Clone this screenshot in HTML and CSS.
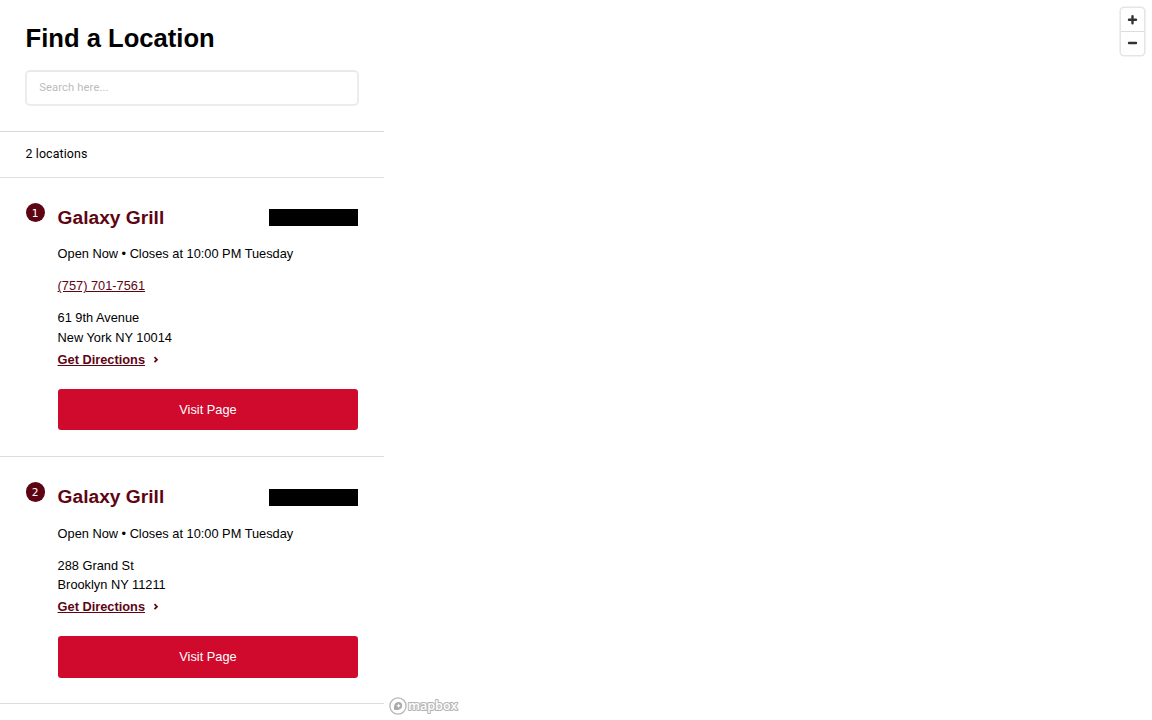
FILE: index.html
```html
<!DOCTYPE html>
<html lang="en">
<head>
<meta charset="utf-8">
<title>Find a Location</title>
<link rel="stylesheet" href="styles.css">
</head>
<body>
<div class="locator">
  <main class="sidebar">
    <header class="search">
      <h1 class="search-title">Find a Location</h1>
      <input class="search-input" type="text" placeholder="Search here..." aria-label="Search">
    </header>
    <div class="count">2 locations</div>
    <article class="card">
      <div class="pin">1</div>
      <div class="card-body">
        <div class="card-head"><h2 class="name">Galaxy Grill</h2><span class="distance"></span></div>
        <div class="row">Open Now • Closes at 10:00 PM Tuesday</div>
        <div class="row"><a class="phone">(757) 701-7561</a></div>
        <div class="row">61 9th Avenue<br>New York NY 10014</div>
        <div class="directions"><a class="directions-link">Get Directions</a><svg class="chevron" viewBox="0 0 6 7"><path d="M1.5 1.2l2.5 2.5-2.5 2.5"/></svg></div>
        <a class="button">Visit Page</a>
      </div>
    </article>
    <article class="card">
      <div class="pin">2</div>
      <div class="card-body">
        <div class="card-head"><h2 class="name">Galaxy Grill</h2><span class="distance"></span></div>
        <div class="row">Open Now • Closes at 10:00 PM Tuesday</div>
        <div class="row">288 Grand St<br>Brooklyn NY 11211</div>
        <div class="directions"><a class="directions-link">Get Directions</a><svg class="chevron" viewBox="0 0 6 7"><path d="M1.5 1.2l2.5 2.5-2.5 2.5"/></svg></div>
        <a class="button">Visit Page</a>
      </div>
    </article>
  </main>
  <section class="map">
    <div class="zoom">
      <button class="zoom-button" aria-label="Zoom in"><svg class="zoom-icon" viewBox="0 0 11 10"><path d="M5.5 1.2v7M2 4.7h7"/></svg></button>
      <button class="zoom-button" aria-label="Zoom out"><svg class="zoom-icon" viewBox="0 0 11 10"><path d="M2 5h7"/></svg></button>
    </div>
    <svg class="logo" viewBox="0 0 72 20">
      <circle cx="10" cy="10" r="8.1" fill="#fff" stroke="#b5b5b5" stroke-width="1.3"/>
      <path d="M6.2 13.8C5.6 10.4 6.4 6 10.5 6a3.7 3.7 0 0 1 3.7 3.7c0 3.8-4.6 4.7-8 4.1z" fill="#aaa"/>
      <path d="M10.6 7.5l.7 1.5 1.5.7-1.5.7-.7 1.5-.7-1.5-1.5-.7 1.5-.7z" fill="#fff"/>
      <text class="wordmark" x="20" y="13.6" textLength="49.5" lengthAdjust="spacingAndGlyphs">mapbox</text>
    </svg>
  </section>
</div>
</body>
</html>
```
FILE: styles.css
```css
* { box-sizing: border-box; }
body { margin: 0; background: #fff; color: #000; font: 12.8px/19.2px "Liberation Sans", Arial, sans-serif; }
.locator { display: flex; height: 720px; overflow: hidden; }
.sidebar { width: 384px; flex: none; }
.search { height: 132px; padding: 19.2px 25.6px 0; border-bottom: 1px solid #d9d9d9; }
.search-title { margin: 0 0 12.8px; font-size: 25.6px; line-height: 38.4px; font-weight: 700; }
.search-input { display: block; width: 333.4px; height: 35.6px; margin-left: -.2px; padding: 0 11.9px 1.6px; border: 2px solid #ececec; border-top-color: #e9e9e9; border-radius: 5px; background: #fff; font: 11.2px Roboto, sans-serif; letter-spacing: .12px; outline: 0; }
.search-input::placeholder { color: #bcbcbc; opacity: 1; }
.count { height: 45.6px; padding: 12.2px 25.6px 0; border-bottom: 1px solid #e0e0e0; font-family: Roboto, sans-serif; font-size: 12.4px; letter-spacing: .1px; }
.card { display: flex; gap: 12.8px; padding: 25.6px 25.6px 25.4px; border-bottom: 1px solid #dcdcdc; }
.pin { flex: none; width: 19.2px; height: 19.2px; border-radius: 50%; background: #5e0514; color: #fff; text-align: center; font: 10.6px/20px "DejaVu Sans", sans-serif; }
.card-body { flex: 1; }
.card-head { display: flex; align-items: flex-start; justify-content: space-between; height: 28.4px; }
.name { margin: .8px 0 0; font-size: 19.2px; line-height: 28.8px; font-weight: 700; color: #5e0514; }
.distance { width: 89.6px; height: 17px; margin-top: 6.2px; background: #000; }
.row { margin-top: 12.8px; }
.phone, .directions-link { color: #5e0514; text-decoration: underline; }
.directions { display: flex; align-items: center; gap: 8px; margin-top: 3.2px; font-weight: 700; }
.chevron { width: 6px; height: 7px; fill: none; stroke: #5e0514; stroke-width: 1.7; }
.button { display: block; height: 41.6px; margin-top: 19.6px; border-radius: 3.2px; background: #cf0a2c; color: #fff; line-height: 41.6px; text-align: center; }
.map { position: relative; flex: 1; }
.zoom { position: absolute; top: 8px; right: 8px; width: 23.5px; border-radius: 3.2px; background: #fff; box-shadow: 0 0 0 1.6px rgba(0, 0, 0, .1); }
.zoom-button { display: grid; place-items: center; width: 100%; height: 23.2px; padding: 0; border: 0; background: none; }
.zoom-button + .zoom-button { height: 23.6px; border-top: 1px solid #ddd; }
.zoom-icon { width: 11px; height: 10px; fill: none; stroke: #333; stroke-width: 2.4; stroke-linecap: round; }
.logo { position: absolute; left: 4px; bottom: 4px; width: 72px; height: 20px; }
.wordmark { font: 600 13px "Open Sans", sans-serif; fill: #fff; stroke: #b5b5b5; stroke-width: 2.2px; stroke-linejoin: round; paint-order: stroke; }
```
